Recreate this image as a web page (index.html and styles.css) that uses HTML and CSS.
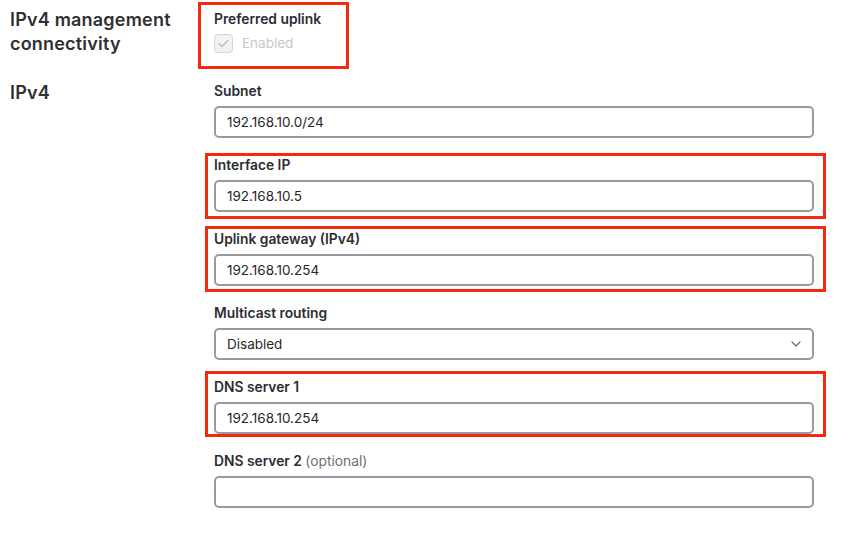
FILE: index.html
```html
<!DOCTYPE html>
<html lang="en">
<head>
<meta charset="utf-8">
<title>IPv4 management connectivity</title>
<link rel="stylesheet" href="styles.css">
</head>
<body>
<div class="page">
  <section class="section section-top">
    <h2 class="heading">IPv4 management<br>connectivity</h2>
    <div class="fields">
      <div class="field field-uplink hl hl-uplink">
        <div class="label">Preferred uplink</div>
        <label class="check">
          <span class="box">
            <svg width="11" height="9" viewBox="0 0 11 9"><path d="M1 4.6 L4 7.4 L10 1.4" fill="none" stroke="#b9bdc3" stroke-width="1.4" stroke-linecap="round" stroke-linejoin="round"/></svg>
          </span>
          <span class="check-text">Enabled</span>
        </label>
      </div>
    </div>
  </section>
  <section class="section section-ipv4">
    <h2 class="heading">IPv4</h2>
    <div class="fields">
      <div class="field first">
        <div class="label">Subnet</div>
        <div class="input">192.168.10.0/24</div>
      </div>
      <div class="field hl hl-a">
        <div class="label">Interface IP</div>
        <div class="input">192.168.10.5</div>
      </div>
      <div class="field hl hl-b">
        <div class="label">Uplink gateway (IPv4)</div>
        <div class="input">192.168.10.254</div>
      </div>
      <div class="field">
        <div class="label">Multicast routing</div>
        <div class="input select">
          <span>Disabled</span>
          <svg class="chev" width="10" height="6" viewBox="0 0 10 6"><path d="M1 1 L5 5 L9 1" fill="none" stroke="#6f747a" stroke-width="1.3" stroke-linecap="round" stroke-linejoin="round"/></svg>
        </div>
      </div>
      <div class="field hl hl-c">
        <div class="label">DNS server 1</div>
        <div class="input">192.168.10.254</div>
      </div>
      <div class="field">
        <div class="label">DNS server 2 <span class="optional">(optional)</span></div>
        <div class="input"></div>
      </div>
    </div>
  </section>
</div>
</body>
</html>
```

FILE: styles.css
```css
html, body {
  margin: 0;
  padding: 0;
  background: #ffffff;
}

body {
  font-family: "Inter", "Liberation Sans", sans-serif;
  color: #2a2d31;
}

.page {
  padding-left: 10px;
}

.section {
  display: grid;
  grid-template-columns: 204px 600px;
}

.section-top {
  padding-top: 8px;
}

.section-ipv4 {
  margin-top: 25px;
}

.heading {
  margin: 0;
  font-family: "Inter", "Liberation Sans", sans-serif;
  font-weight: 600;
  font-size: 18px;
  line-height: 24px;
  color: #2e3034;
  letter-spacing: 0.2px;
}

.fields {
  display: flex;
  flex-direction: column;
  gap: 19px;
}

.field {
  display: flex;
  flex-direction: column;
  gap: 7px;
}

.field.first {
  margin-top: 2px;
}

.field-uplink {
  margin-top: 3px;
  gap: 6px;
  width: 120px;
}

.label {
  font-size: 13.8px;
  line-height: 16px;
  font-weight: 600;
  color: #2a2d31;
  white-space: nowrap;
}

.optional {
  font-weight: 400;
  color: #6c7178;
}

.input {
  box-sizing: border-box;
  height: 32px;
  border: 2px solid #969ba2;
  border-radius: 5px;
  padding: 0 11px;
  display: flex;
  align-items: center;
  font-size: 13.5px;
  color: #24272b;
  background: #ffffff;
}

.select {
  justify-content: space-between;
  padding-right: 11px;
}

.chev {
  display: block;
}

.check {
  display: flex;
  align-items: center;
  gap: 9px;
  height: 20px;
}

.box {
  box-sizing: border-box;
  width: 19px;
  height: 19px;
  border: 1.5px solid #d3d6da;
  border-radius: 4px;
  background: #f1f2f4;
  display: flex;
  align-items: center;
  justify-content: center;
}

.check-text {
  font-size: 13.5px;
  color: #c3c7cc;
}

.hl {
  position: relative;
}

.hl::after {
  content: "";
  position: absolute;
  border: 3px solid #f5290f;
  pointer-events: none;
}

.hl-uplink::after {
  top: -9px;
  bottom: -16px;
  left: -16px;
  width: 145px;
}

.hl-a::after {
  top: -4px;
  bottom: -7px;
  left: -9px;
  right: -12px;
}

.hl-b::after {
  top: -5px;
  bottom: -6px;
  left: -9px;
  right: -12px;
}

.hl-c::after {
  top: -8px;
  bottom: -3px;
  left: -9px;
  right: -12px;
}
```
